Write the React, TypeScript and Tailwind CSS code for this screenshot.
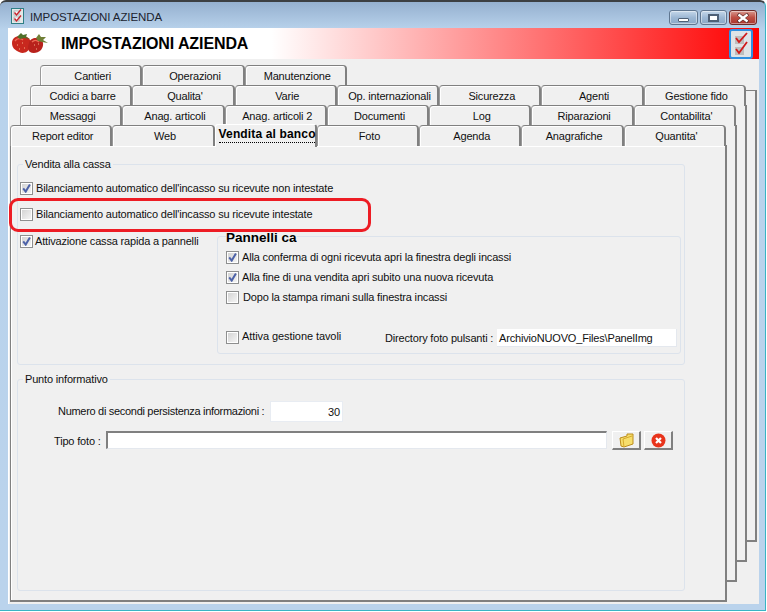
const TAB_ROWS = [
  { margin: 'ml-[30px]', tabs: ['Cantieri', 'Operazioni', 'Manutenzione'] },
  { margin: 'ml-[20px]', tabs: ['Codici a barre', "Qualita'", 'Varie', 'Op. internazionali', 'Sicurezza', 'Agenti', 'Gestione fido'] },
  { margin: 'ml-[10px]', tabs: ['Messaggi', 'Anag. articoli', 'Anag. articoli 2', 'Documenti', 'Log', 'Riparazioni', "Contabilita'"] },
  { margin: 'ml-0', tabs: ['Report editor', 'Web', 'Vendita al banco', 'Foto', 'Agenda', 'Anagrafiche', "Quantita'"] },
];

const ACTIVE_TAB = 'Vendita al banco';

function Checkbox({ checked = false }: { checked?: boolean }) {
  return (
    <span className="block w-[13px] h-[13px] shrink-0 border border-[#8e8f8f] bg-white p-px">
      <span className="block w-full h-full bg-[linear-gradient(135deg,#d4d4d4,#f4f4f4)]">
        {checked && (
          <svg width="9" height="9" viewBox="0 0 9 9" className="block">
            <path d="M1.2 4.4 L3.7 7.6 L7.9 0.6" fill="none" stroke="#4d62a8" strokeWidth="2" />
          </svg>
        )}
      </span>
    </span>
  );
}

function Tab({ label }: { label: string }) {
  if (label === ACTIVE_TAB) {
    return (
      <div className="relative z-10 w-[102.29px] h-[23px] -mt-px -mb-[2px] pl-[3px] border-l border-l-white border-r-2 border-r-[#808080] border-t border-t-white rounded-t-[3px] bg-[#f0f0f0] whitespace-nowrap">
        <span className="block w-[96px] mt-[3px] h-[15px] leading-[13px] text-[12px] font-bold tracking-[0.15px] text-black border-b border-dotted border-black">
          {label}
        </span>
      </div>
    );
  }
  return (
    <div className="w-[102.29px] h-[21px] pt-[3px] pl-[4px] text-center leading-[14px] text-[#111] border-t border-t-[#808080] border-l border-l-[#9a9a9a] border-r-2 border-r-[#808080] rounded-t-[4px] bg-[#f0f0f0] shadow-[inset_1px_1px_0_#fff] whitespace-nowrap">
      {label}
    </div>
  );
}

function BackPage({ className }: { className: string }) {
  return <div className={`col-start-1 row-start-1 bg-[#f0f0f0] border-t border-t-[#808080] border-r-2 border-b-2 border-r-[#808080] border-b-[#808080] ${className}`} />;
}

function GroupBox({ title, className, children }: { title: string; className: string; children?: React.ReactNode }) {
  return (
    <div className={`relative border border-[#dce3ec] rounded-[3px] ${className}`}>
      <span className="absolute left-[5px] -top-[7px] px-[2px] leading-[13px] bg-[#f0f0f0] text-[#111]">{title}</span>
      {children}
    </div>
  );
}

function TitleIcon() {
  return (
    <svg width="14" height="16" viewBox="0 0 14 16" className="block">
      <rect x="0.5" y="0.5" width="12" height="15" fill="#e4e8e8" stroke="#2f7f86" />
      <rect x="3" y="3" width="5" height="4" fill="#fff" stroke="#8a9a9a" strokeWidth="0.6" />
      <rect x="3" y="9" width="5" height="4" fill="#fff" stroke="#8a9a9a" strokeWidth="0.6" />
      <path d="M3.5 4.5 L5.5 7 L10 1.5 M3.5 10.5 L5.5 13 L10 7.5" fill="none" stroke="#c8242c" strokeWidth="1.4" />
    </svg>
  );
}

function Strawberries() {
  return (
    <svg width="38" height="22" viewBox="0 0 38 22" className="block">
      <path d="M1 10 C1 4 7 2 13 3 C19 4 21 9 19 14 C17 20 12 21 8 19 C4 17 1 15 1 10 Z" fill="#c8281e" />
      <path d="M18 10 C19 5 25 4 29 6 C33 8 33 13 30 17 C27 20 22 21 19 19 C16 16 17 13 18 10 Z" fill="#b8221c" />
      <path d="M4 8 C6 5 10 5 12 7 M21 9 C23 7 26 7 28 9" fill="none" stroke="#ee6a56" strokeWidth="1.4" />
      <path d="M6 4 L10 0 L12 2 L16 1 L15 4 L19 6 L13 5 L9 6 Z" fill="#4f6f2a" />
      <path d="M25 5 L28 1 L30 4 L35 4 L32 7 L37 10 L31 9 L27 8 Z" fill="#6f7f36" />
      <path d="M6 12 h1 M11 10 h1 M13 15 h1 M8 16 h1 M23 12 h1 M27 11 h1 M25 16 h1" stroke="#f3b08a" strokeWidth="1" />
    </svg>
  );
}

function ChecklistIcon() {
  return (
    <svg width="24" height="30" viewBox="0 0 24 30" className="block">
      <rect x="1" y="1" width="22" height="28" rx="2" fill="#dfe3e6" stroke="#2f8fe0" strokeWidth="2" />
      <rect x="6" y="7" width="9" height="8" fill="#bdbdbd" />
      <rect x="6" y="18" width="9" height="8" fill="#bdbdbd" />
      <path d="M7 9 L10 13 L18 4 M7 20 L10 24 L18 13" fill="none" stroke="#d01a1a" strokeWidth="1.8" />
    </svg>
  );
}

function CaptionButton({ className, children }: { className: string; children: React.ReactNode }) {
  return (
    <div className={`flex items-center justify-center h-[15px] rounded-[3px] border shadow-[inset_0_0_0_1px_rgba(255,255,255,0.45)] ${className}`}>
      {children}
    </div>
  );
}

function SquareButton({ children }: { children: React.ReactNode }) {
  return (
    <div className="flex items-center justify-center w-[29px] h-[19px] bg-[#f0f0f0] border-t border-l border-t-white border-l-white border-r-2 border-b-2 border-r-[#808080] border-b-[#808080]">
      {children}
    </div>
  );
}

export default function App() {
  return (
    <div className="relative w-[767px] h-[612px] bg-white overflow-hidden whitespace-nowrap text-[11px] tracking-[-0.17px] font-['Liberation_Sans',Arial,sans-serif]">
      <div className="w-[766px] h-[611px] border-t-2 border-t-[#3c3f42] border-r border-r-[#39b4c4] border-b border-b-[#39b4c4] rounded-t-[6px] bg-[linear-gradient(180deg,#95b0cf_0,#b9d3ec_28px,#bad3ec_100%)]">
        {/* Title bar */}
        <div className="flex items-start h-[26px]">
          <div className="ml-[11px] mt-[6px]">
            <TitleIcon />
          </div>
          <span className="ml-[5px] mt-[8px] leading-[15px] text-[11.5px] tracking-[-0.1px] text-[#1c2430]">IMPOSTAZIONI AZIENDA</span>
          <div className="ml-auto mr-[8px] mt-[8px] flex gap-[2px]">
            <CaptionButton className="w-[29px] border-[#5f7690] bg-[linear-gradient(180deg,#c6d8ea,#9db8d4_50%,#8ba8c6)]">
              <span className="block w-[11px] h-[4px] rounded-[1px] bg-white border border-[#4e6076] mt-[4px]" />
            </CaptionButton>
            <CaptionButton className="w-[27px] border-[#5f7690] bg-[linear-gradient(180deg,#c6d8ea,#9db8d4_50%,#8ba8c6)]">
              <span className="block w-[11px] h-[8px] bg-white border-2 border-[#4e6076]" />
            </CaptionButton>
            <CaptionButton className="w-[28px] border-[#6e2a28] bg-[linear-gradient(180deg,#d89a90,#bf4f44_50%,#a8362e)]">
              <svg width="14" height="10" viewBox="0 0 14 10" className="block">
                <path d="M2 1 L12 9 M12 1 L2 9" stroke="#4a2020" strokeWidth="3.4" />
                <path d="M2.5 1.5 L11.5 8.5 M11.5 1.5 L2.5 8.5" stroke="#fff" strokeWidth="2.4" />
              </svg>
            </CaptionButton>
          </div>
        </div>

        {/* Client area */}
        <div className="ml-[8px] w-[751px] h-[576px] bg-[#f0f0f0] border-l border-l-white">
          <div className="flex items-center justify-between h-[31px] bg-[linear-gradient(90deg,#fff_0,#fff_35%,#f00_100%)]">
            <div className="flex items-center">
              <div className="ml-[2px]">
                <Strawberries />
              </div>
              <span className="ml-[12px] text-[16px] font-bold text-black tracking-[-0.1px] leading-[20px]">IMPOSTAZIONI AZIENDA</span>
            </div>
            <div className="mr-[6px]">
              <ChecklistIcon />
            </div>
          </div>

          <div className="pt-[6px] pl-px">
            <div className="grid w-[747px] h-[537px]">
              <BackPage className="mt-[25px] ml-[30px] mb-[60px]" />
              <BackPage className="mt-[40px] ml-[20px] mr-[10px] mb-[40px]" />
              <BackPage className="mt-[60px] ml-[10px] mr-[20px] mb-[20px]" />

              {/* Front page */}
              <div className="col-start-1 row-start-1 mt-[80px] mr-[30px] bg-[#f0f0f0] border-t border-l border-t-[#808080] border-l-[#808080] border-r-2 border-b-2 border-r-[#808080] border-b-[#808080] shadow-[inset_1px_1px_0_#fff]">
                <GroupBox title="Vendita alla cassa" className="ml-[6px] mt-[18px] w-[668px] h-[201px]">
                  <div className="flex items-center gap-[3px] ml-[2px] mt-[17px] text-[#111] leading-[13px]">
                    <Checkbox checked />
                    <span>Bilanciamento automatico dell'incasso su ricevute non intestate</span>
                  </div>
                  <div className="flex items-center gap-[3px] ml-[2px] mt-[13px] text-[#111] leading-[13px]">
                    <Checkbox />
                    <span>Bilanciamento automatico dell'incasso su ricevute intestate</span>
                  </div>
                  <div className="flex items-start ml-[2px] mt-[14px] text-[#111] leading-[13px]">
                    <Checkbox checked />
                    <span className="ml-[2px] w-[182px]">Attivazione cassa rapida a pannelli</span>
                    <div className="relative mt-px w-[464px] h-[118px] border border-[#dce3ec] rounded-[3px]">
                      <span className="absolute left-[8px] -top-[6px] h-[12px] overflow-hidden text-[13.5px] tracking-normal font-bold leading-[13px] text-black bg-[#f0f0f0]">Pannelli ca</span>
                      <div className="flex items-center gap-[3px] ml-[8px] mt-[14px]">
                        <Checkbox checked />
                        <span>Alla conferma di ogni ricevuta apri la finestra degli incassi</span>
                      </div>
                      <div className="flex items-center gap-[3px] ml-[8px] mt-[7px]">
                        <Checkbox checked />
                        <span>Alla fine di una vendita apri subito una nuova ricevuta</span>
                      </div>
                      <div className="flex items-center gap-[4px] ml-[8px] mt-[7px]">
                        <Checkbox />
                        <span>Dopo la stampa rimani sulla finestra incassi</span>
                      </div>
                      <div className="flex items-start ml-[8px] mt-[25px]">
                        <div className="mt-[2px]">
                          <Checkbox />
                        </div>
                        <span className="ml-[3px] mt-[1px] w-[143px] tracking-[-0.08px]">Attiva gestione tavoli</span>
                        <span className="mt-[3px] w-[112px]">Directory foto pulsanti :</span>
                        <div className="w-[180px] h-[18px] pl-[2px] leading-[18px] bg-white border-b border-r border-[#e4e8ee] overflow-hidden">ArchivioNUOVO_Files\PanelImg</div>
                      </div>
                    </div>
                  </div>
                </GroupBox>

                <GroupBox title="Punto informativo" className="ml-[6px] mt-[14px] w-[668px] h-[212px]">
                  <div className="flex items-center mt-[21px] text-[#111] leading-[13px]">
                    <span className="ml-[40px] w-[212px] tracking-[-0.3px]">Numero di secondi persistenza informazioni :</span>
                    <div className="w-[73px] h-[21px] pr-[2px] text-right leading-[21px] bg-white border border-[#e8ecf2]">30</div>
                  </div>
                  <div className="flex items-start mt-[9px] text-[#111] leading-[13px]">
                    <span className="ml-[36px] mt-[4px] w-[52px]">Tipo foto :</span>
                    <div className="w-[501px] h-[18px] bg-white border-t-2 border-l-2 border-t-[#808080] border-l-[#808080] border-r border-b border-r-[#e4e8ee] border-b-[#e4e8ee]" />
                    <div className="flex gap-[3px] ml-[5px]">
                      <SquareButton>
                        <svg width="15" height="15" viewBox="0 0 15 15" className="block">
                          <path d="M1 5 L8 3 L8 1 L14 1 L14 11 L5 14 L2 13 Z" fill="#f6de6c" stroke="#bb8c1c" strokeWidth="1" />
                          <path d="M5 14 L4 6 L13 3" fill="none" stroke="#d6a92c" strokeWidth="1" />
                        </svg>
                      </SquareButton>
                      <SquareButton>
                        <svg width="15" height="15" viewBox="0 0 15 15" className="block">
                          <circle cx="7.5" cy="7.5" r="7" fill="#e8341c" />
                          <path d="M5 5 L10 10 M10 5 L5 10" stroke="#fff" strokeWidth="2.2" />
                        </svg>
                      </SquareButton>
                    </div>
                  </div>
                </GroupBox>
              </div>

              {/* Tab rows sit over the pages */}
              <div className="col-start-1 row-start-1 flex flex-col self-start">
                {TAB_ROWS.map((row) => (
                  <div key={row.tabs[0]} className={`flex h-[20px] ${row.margin}`}>
                    {row.tabs.map((tab) => (
                      <Tab key={tab} label={tab} />
                    ))}
                  </div>
                ))}
              </div>
            </div>
          </div>
        </div>
      </div>

      {/* Red annotation drawn over the screenshot */}
      <div className="absolute left-[9px] top-[198px] w-[362px] h-[34px] border-[3px] border-[#ed1c24] rounded-[9px]" />
    </div>
  );
}
